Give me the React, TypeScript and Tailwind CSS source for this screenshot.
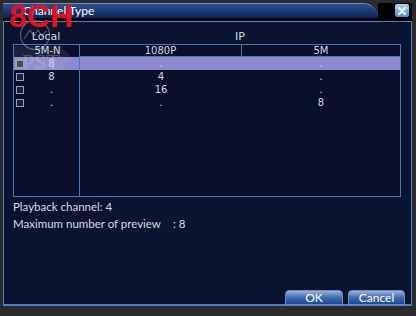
import React from "react";

type Row = { checked: boolean; local: string; p1080: string; m5: string };

const rows: Row[] = [
  { checked: true, local: "8", p1080: ".", m5: "." },
  { checked: false, local: "8", p1080: "4", m5: "." },
  { checked: false, local: ".", p1080: "16", m5: "." },
  { checked: false, local: ".", p1080: ".", m5: "8" },
];

function Watermark() {
  return (
    <div className="absolute left-[19px] top-[19px] pointer-events-none">
      <svg width="32" height="32" viewBox="0 0 32 32" className="opacity-40">
        <circle cx="16" cy="16" r="14.5" fill="none" stroke="#c8cbe0" strokeWidth="1.2" />
        <path d="M5 20 L11 11 L15 17 L19 11 L23 17 L27 12" fill="none" stroke="#c8cbe0" strokeWidth="1.2" />
      </svg>
      <div className="absolute left-[-5px] top-[27px] w-[58px] h-[24px] bg-[#c8cbe0] opacity-10 [clip-path:polygon(0_0,80%_0,100%_50%,80%_100%,0_100%)]" />
      <div
        className="absolute left-[3px] top-[32px] text-[22px] leading-none text-[#c8cbe0] opacity-30"
        style={{ fontFamily: '"Liberation Serif", serif' }}
      >
        PST
      </div>
    </div>
  );
}

export default function App() {
  return (
    <div
      className="relative w-[416px] h-[316px] bg-[#2b2b2d] pt-[3px] pl-[3px] pr-[4px] pb-[10px] flex flex-col text-[#d6dae6] overflow-hidden"
      style={{ fontFamily: '"DejaVu Sans", sans-serif' }}
    >
      {/* Title bar */}
      <div className="flex h-[15px] shrink-0">
        <div className="flex-1 rounded-tr-[18px] border-t border-[#6f8fc0] bg-gradient-to-b from-[#2a4f93] to-[#0c2458] flex items-center pl-[20px]">
          <span className="text-[12px] leading-none text-white" style={{ fontFamily: "Lato, sans-serif" }}>
            Channel Type
          </span>
        </div>
        <div className="w-[34px] bg-black flex items-center justify-end pr-[3px]">
          <div className="w-[14px] h-[13px] rounded-[2px] bg-gradient-to-b from-[#a9d4f4] to-[#4f8fd0] flex items-center justify-center">
            <svg width="8" height="8" viewBox="0 0 8 8">
              <path d="M1 1 L7 7 M7 1 L1 7" stroke="white" strokeWidth="2" strokeLinecap="round" />
            </svg>
          </div>
        </div>
      </div>
      <div className="h-[3px] bg-black shrink-0" />

      {/* Panel */}
      <div className="flex-1 border border-[#4f7fc4] border-b-2 bg-[#0a1330] flex flex-col pl-[9px] pr-[10px]">
        {/* Group header */}
        <div className="flex h-[22px] items-end pb-[2px] text-[11px] leading-none">
          <div className="w-[66px] text-center">Local</div>
          <div className="flex-1 text-center">IP</div>
        </div>

        {/* Table */}
        <div className="h-[153px] border border-[#4a78bd] bg-[#080f2a] flex text-[10px] leading-none">
          <div className="w-[66px] border-r border-[#4a78bd] flex flex-col">
            <div className="h-[12px] flex items-center justify-center pl-[2px]">5M-N</div>
            {rows.map((r, i) => (
              <div
                key={i}
                className={`h-[13px] flex items-center pl-[2px] ${i === 0 ? "bg-[#8f8ace]" : ""}`}
              >
                <div
                  className={`w-[8px] h-[8px] border border-[#9aa0b4] ${r.checked ? "bg-[#3a3a4a]" : "bg-[#1a2035]"}`}
                />
                <div className="flex-1 text-center">{r.local}</div>
              </div>
            ))}
          </div>
          <div className="flex-1 flex flex-col">
            <div className="h-[12px] flex border-b border-[#4a78bd]">
              <div className="w-[162px] border-r border-[#4a78bd] flex items-center justify-center">1080P</div>
              <div className="flex-1 flex items-center justify-center">5M</div>
            </div>
            {rows.map((r, i) => (
              <div key={i} className={`h-[13px] flex ${i === 0 ? "bg-[#8f8ace]" : ""}`}>
                <div className="w-[162px] flex items-center justify-center">{r.p1080}</div>
                <div className="flex-1 flex items-center justify-center">{r.m5}</div>
              </div>
            ))}
          </div>
        </div>

        {/* Info */}
        <div
          className="mt-[4px] flex flex-col gap-[5px] text-[11.5px] leading-[12px]"
          style={{ fontFamily: "Lato, sans-serif" }}
        >
          <div>Playback channel: 4</div>
          <div>
            Maximum number of preview<span className="inline-block w-[12px]" />: 8
          </div>
        </div>

        {/* Buttons */}
        <div className="mt-auto mb-[-1px] mr-[-4px] flex justify-end gap-[5px]">
          <button
            className="w-[58px] h-[15px] rounded-t-[4px] bg-gradient-to-b from-[#9fb4d4] via-[#3f6cb0] to-[#1b4796] text-white text-[12px] leading-none border border-[#6a8cc4]"
            style={{ fontFamily: "Lato, sans-serif" }}
          >
            OK
          </button>
          <button
            className="w-[57px] h-[15px] rounded-t-[4px] bg-gradient-to-b from-[#9fb4d4] via-[#3f6cb0] to-[#1b4796] text-white text-[12px] leading-none border border-[#6a8cc4]"
            style={{ fontFamily: "Lato, sans-serif" }}
          >
            Cancel
          </button>
        </div>
      </div>

      <Watermark />

      {/* Red overlay label */}
      <div
        className="absolute left-[9px] top-0 text-[32px] font-bold leading-none text-[#e8101c] pointer-events-none"
        style={{ fontFamily: '"Liberation Sans", sans-serif' }}
      >
        8CH
      </div>
    </div>
  );
}
